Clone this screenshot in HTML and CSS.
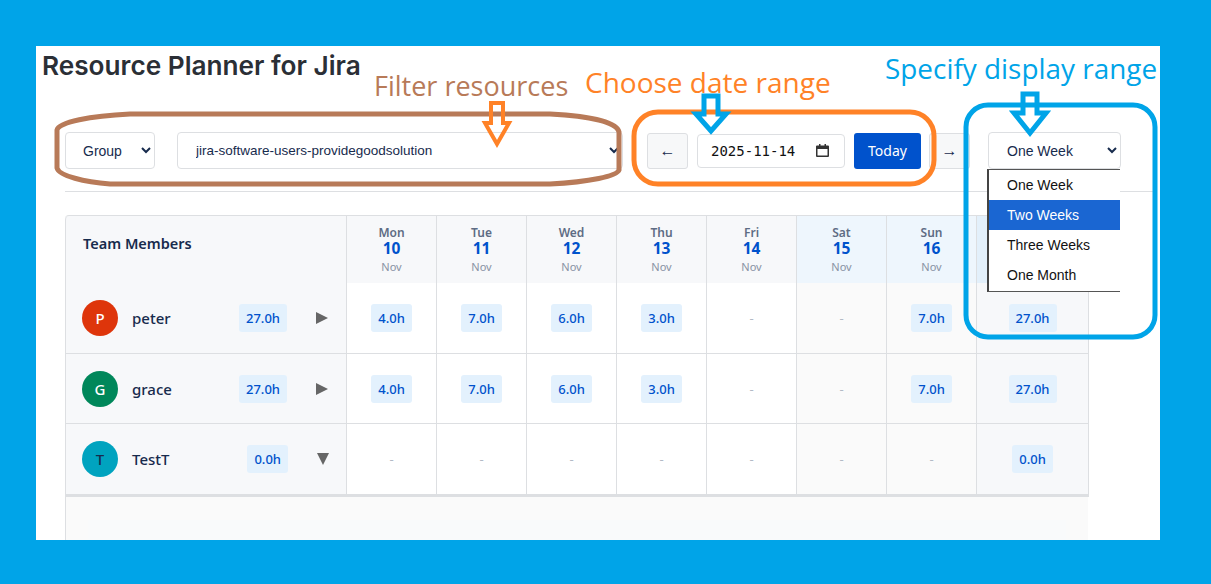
FILE: index.html
```html
<!DOCTYPE html>
<html lang="en">
<head>
    <meta charset="UTF-8">
    <meta name="viewport" content="width=device-width, initial-scale=1.0">
    <title>Resource Planner for Jira</title>
    <link rel="stylesheet" href="styles.css">
</head>
<body>
    <div class="page">
        <h1>Resource Planner for Jira</h1>

        <div class="toolbar">
            <select class="field group-select">
                <option>Group</option>
            </select>
            <select class="field member-select">
                <option>jira-software-users-providegoodsolution</option>
            </select>
            <button class="nav-btn prev">←</button>
            <div class="date-input">
                <span>2025-11-14</span>
                <svg width="13" height="13" viewBox="0 0 13 13">
                    <path d="M3 0 H4.500 V1.500 H8.500 V0 H10 V1.500 H12 Q13 1.500 13 2.500 V12 Q13 13 12 13 H1 Q0 13 0 12 V2.500 Q0 1.500 1 1.500 H3 Z M1.500 5 V11.500 H11.500 V5 Z" fill="#333"/>
                </svg>
            </div>
            <button class="today-btn">Today</button>
            <button class="nav-btn next">→</button>
            <select class="field range-select">
                <option>One Week</option>
            </select>
        </div>

        <div class="planner">
            <div class="head-cell members-head">Team Members</div>
            <div class="head-cell day"><b>Mon</b><strong>10</strong><span>Nov</span></div>
            <div class="head-cell day"><b>Tue</b><strong>11</strong><span>Nov</span></div>
            <div class="head-cell day"><b>Wed</b><strong>12</strong><span>Nov</span></div>
            <div class="head-cell day"><b>Thu</b><strong>13</strong><span>Nov</span></div>
            <div class="head-cell day"><b>Fri</b><strong>14</strong><span>Nov</span></div>
            <div class="head-cell day weekend"><b>Sat</b><strong>15</strong><span>Nov</span></div>
            <div class="head-cell day weekend"><b>Sun</b><strong>16</strong><span>Nov</span></div>
            <div class="head-cell day total-head"></div>

            <div class="member">
                <div class="avatar red">P</div>
                <div class="name">peter</div>
                <div class="hours">27.0h</div>
                <div class="caret right"></div>
            </div>
            <div class="cell"><span class="hours">4.0h</span></div>
            <div class="cell"><span class="hours">7.0h</span></div>
            <div class="cell"><span class="hours">6.0h</span></div>
            <div class="cell"><span class="hours">3.0h</span></div>
            <div class="cell"><span class="none">-</span></div>
            <div class="cell off"><span class="none">-</span></div>
            <div class="cell off"><span class="hours">7.0h</span></div>
            <div class="cell total"><span class="hours">27.0h</span></div>

            <div class="member">
                <div class="avatar green">G</div>
                <div class="name">grace</div>
                <div class="hours">27.0h</div>
                <div class="caret right"></div>
            </div>
            <div class="cell"><span class="hours">4.0h</span></div>
            <div class="cell"><span class="hours">7.0h</span></div>
            <div class="cell"><span class="hours">6.0h</span></div>
            <div class="cell"><span class="hours">3.0h</span></div>
            <div class="cell"><span class="none">-</span></div>
            <div class="cell off"><span class="none">-</span></div>
            <div class="cell off"><span class="hours">7.0h</span></div>
            <div class="cell total"><span class="hours">27.0h</span></div>

            <div class="member">
                <div class="avatar teal">T</div>
                <div class="name">TestT</div>
                <div class="hours">0.0h</div>
                <div class="caret down"></div>
            </div>
            <div class="cell"><span class="none">-</span></div>
            <div class="cell"><span class="none">-</span></div>
            <div class="cell"><span class="none">-</span></div>
            <div class="cell"><span class="none">-</span></div>
            <div class="cell"><span class="none">-</span></div>
            <div class="cell off"><span class="none">-</span></div>
            <div class="cell off"><span class="none">-</span></div>
            <div class="cell total"><span class="hours">0.0h</span></div>
        </div>
        <div class="planner-foot">
            <div class="foot-inner"></div>
        </div>

        <ul class="range-menu">
            <li>One Week</li>
            <li class="active">Two Weeks</li>
            <li>Three Weeks</li>
            <li>One Month</li>
        </ul>
    </div>

    <!-- hand drawn marks on top of the screenshot -->
    <svg class="marks" width="1211" height="584" viewBox="0 0 1211 584">
        <path class="brown" d="M57 130 C59 122 90 116 130 114 L550 114 C590 116 617 122 619 132 L619 170 C617 176 590 182 550 184 L110 184 C85 182 59 176 57 168 Z"/>
        <rect class="orange" x="634" y="112" width="300" height="72" rx="24"/>
        <rect class="blue" x="966" y="105" width="189" height="232" rx="22"/>
        <path class="orange thin" d="M491 103 H503 V123 H509 L497 144 L485 123 H491 Z"/>
        <path class="blue" d="M704 96 H718 V114 H726 L711 131 L696 114 H704 Z"/>
        <path class="blue" d="M1023 94 H1037 V113 H1046 L1030 133 L1014 113 H1023 Z"/>
    </svg>
    <div class="note note-filter">Filter resources</div>
    <div class="note note-date">Choose date range</div>
    <div class="note note-range">Specify display range</div>
</body>
</html>
```

FILE: styles.css
```css
body {
    margin: 0;
    height: 584px;
    overflow: hidden;
    background-color: #00a4e8;
    font-family: "Noto Sans", sans-serif;
    color: #172b4d;
}

.page {
    position: relative;
    width: 1124px;
    height: 494px;
    margin: 46px 0 0 36px;
    padding-top: 1px;
    box-sizing: border-box;
    background-color: #fff;
    overflow: hidden;
}

h1 {
    margin: 4px 0 0 6px;
    font-family: Inter, sans-serif;
    font-size: 26.2px;
    line-height: 30px;
    font-weight: 600;
    color: #2b2f36;
}

.toolbar {
    display: flex;
    align-items: center;
    height: 37px;
    margin: 51px 7px 0 29px;
    padding-bottom: 22px;
    border-bottom: 1px solid #dddfe2;
}

.field {
    height: 37px;
    padding: 0 8px 0 14px;
    border: 1px solid #dddfe2;
    border-radius: 4px;
    background-color: #fff;
    font-family: "Liberation Sans", sans-serif;
    font-size: 14px;
    color: #172b4d;
}

.group-select {
    width: 90px;
    padding-left: 13px;
}

.member-select {
    width: 446px;
    margin-left: 22px;
    padding-left: 14px;
    font-size: 13.5px;
}

.nav-btn {
    width: 41px;
    height: 36px;
    padding: 0;
    border: 1px solid #dddfe2;
    border-radius: 3px;
    background-color: #f7f8f9;
    font-family: "Liberation Sans", sans-serif;
    font-size: 16px;
    color: #172b4d;
}

.prev {
    margin-left: 24px;
}

.date-input {
    display: flex;
    align-items: center;
    justify-content: space-between;
    width: 148px;
    height: 34px;
    margin-left: 9px;
    padding: 0 15px 0 13px;
    box-sizing: border-box;
    border: 1px solid #dddfe2;
    border-radius: 4px;
    font-family: "DejaVu Sans Mono", monospace;
    font-size: 14px;
    color: #111;
}

.today-btn {
    width: 67px;
    height: 36px;
    margin-left: 9px;
    padding: 0;
    border: none;
    border-radius: 3px;
    background-color: #0052cc;
    font-family: "Noto Sans", sans-serif;
    font-size: 14px;
    color: #fff;
}

.next {
    margin-left: 8px;
}

.range-select {
    width: 133px;
    margin-left: 18px;
}

.range-menu {
    position: absolute;
    left: 951px;
    top: 123px;
    width: 131px;
    margin: 0;
    padding: 0 0 1px;
    list-style: none;
    background-color: #fff;
    border-top: 1px solid #555;
    border-left: 2px solid #444;
    border-bottom: 1px solid #555;
    font-family: "Liberation Sans", sans-serif;
    font-size: 14px;
    color: #111;
}

.range-menu li {
    height: 30px;
    line-height: 30px;
    padding-left: 18px;
}

.range-menu .active {
    background-color: #1a66d2;
    color: #fff;
}

.planner {
    display: grid;
    grid-template-columns: 282px repeat(7, 90px) 112px;
    grid-template-rows: 67px 71px 70px 71px;
    width: 1024px;
    margin: 23px 0 0 29px;
    box-sizing: border-box;
    border-top: 1px solid #dddfe2;
    border-radius: 4px 0 0 0;
    border-bottom: 2px solid #dddfe2;
}

.head-cell {
    background-color: #f7f8fa;
    border-right: 1px solid #dddfe2;
}

.members-head {
    padding: 17px 0 0 17px;
    border-left: 1px solid #dddfe2;
    border-radius: 4px 0 0 0;
    font-size: 14.5px;
    font-weight: 600;
}

.day {
    display: flex;
    flex-direction: column;
    align-items: center;
    padding-top: 10px;
}

.day b {
    font-size: 12px;
    line-height: 14px;
    font-weight: 600;
    color: #5e6c84;
}

.day strong {
    font-size: 15.5px;
    line-height: 17px;
    font-weight: 700;
    color: #0052cc;
}

.day span {
    margin-top: 2px;
    font-size: 11px;
    line-height: 15px;
    color: #8993a4;
}

.weekend {
    background-color: #eef6fd;
}

.total-head {
    background-color: #e3f0fb;
}

.member {
    display: flex;
    align-items: center;
    padding: 0 18px 0 16px;
    background-color: #f7f8fa;
    border-left: 1px solid #dddfe2;
    border-right: 1px solid #dddfe2;
    border-bottom: 1px solid #dddfe2;
    font-size: 15px;
}

.avatar {
    flex: none;
    display: flex;
    align-items: center;
    justify-content: center;
    width: 36px;
    height: 36px;
    border-radius: 50%;
    font-size: 15px;
    font-weight: 500;
    color: #fff;
}

.avatar.red {
    background-color: #de350b;
}

.avatar.green {
    background-color: #00875a;
}

.avatar.teal {
    background-color: #00a3bf;
    color: #172b4d;
}

.name {
    flex: 1;
    margin-left: 14px;
    font-weight: 500;
}

.hours {
    padding: 4px 7px;
    border-radius: 3px;
    background-color: #e3f1fd;
    font-size: 13px;
    line-height: 20px;
    font-weight: 500;
    color: #0052cc;
}

.caret {
    flex: none;
    width: 0;
    height: 0;
    margin-left: 29px;
}

.caret.right {
    border-top: 6px solid transparent;
    border-bottom: 6px solid transparent;
    border-left: 12px solid #666;
}

.caret.down {
    margin-right: -1px;
    border-left: 6.5px solid transparent;
    border-right: 6.5px solid transparent;
    border-top: 12px solid #666;
}

.cell {
    display: flex;
    align-items: center;
    justify-content: center;
    border-right: 1px solid #dddfe2;
    border-bottom: 1px solid #dddfe2;
}

.cell.off {
    background-color: #fafafa;
}

.cell.total {
    background-color: #f7f8fa;
}

.none {
    font-size: 13px;
    color: #b3bac5;
}

.planner-foot {
    width: 1023px;
    height: 60px;
    margin-left: 29px;
    padding: 23px 22px 0;
    box-sizing: border-box;
    border-left: 1px solid #dddfe2;
    background-color: #fafafa;
}

.foot-inner {
    height: 37px;
    background-color: #f9fafb;
}

.marks {
    position: absolute;
    left: 0;
    top: 0;
    fill: none;
    pointer-events: none;
}

.marks .brown {
    stroke: #b87a58;
    stroke-width: 5;
}

.marks .orange {
    stroke: #ff8227;
    stroke-width: 5;
}

.marks .thin {
    stroke-width: 4;
}

.marks .blue {
    stroke: #00a4e8;
    stroke-width: 5;
}

.note {
    position: absolute;
    font-family: "Open Sans", sans-serif;
    font-size: 28px;
    line-height: 36px;
    white-space: nowrap;
}

.note-filter {
    left: 374px;
    top: 68px;
    font-size: 27px;
    color: #b87a58;
}

.note-date {
    left: 585px;
    top: 64px;
    color: #ff8227;
}

.note-range {
    left: 885px;
    top: 50px;
    font-size: 27.9px;
    color: #00a4e8;
}
```
